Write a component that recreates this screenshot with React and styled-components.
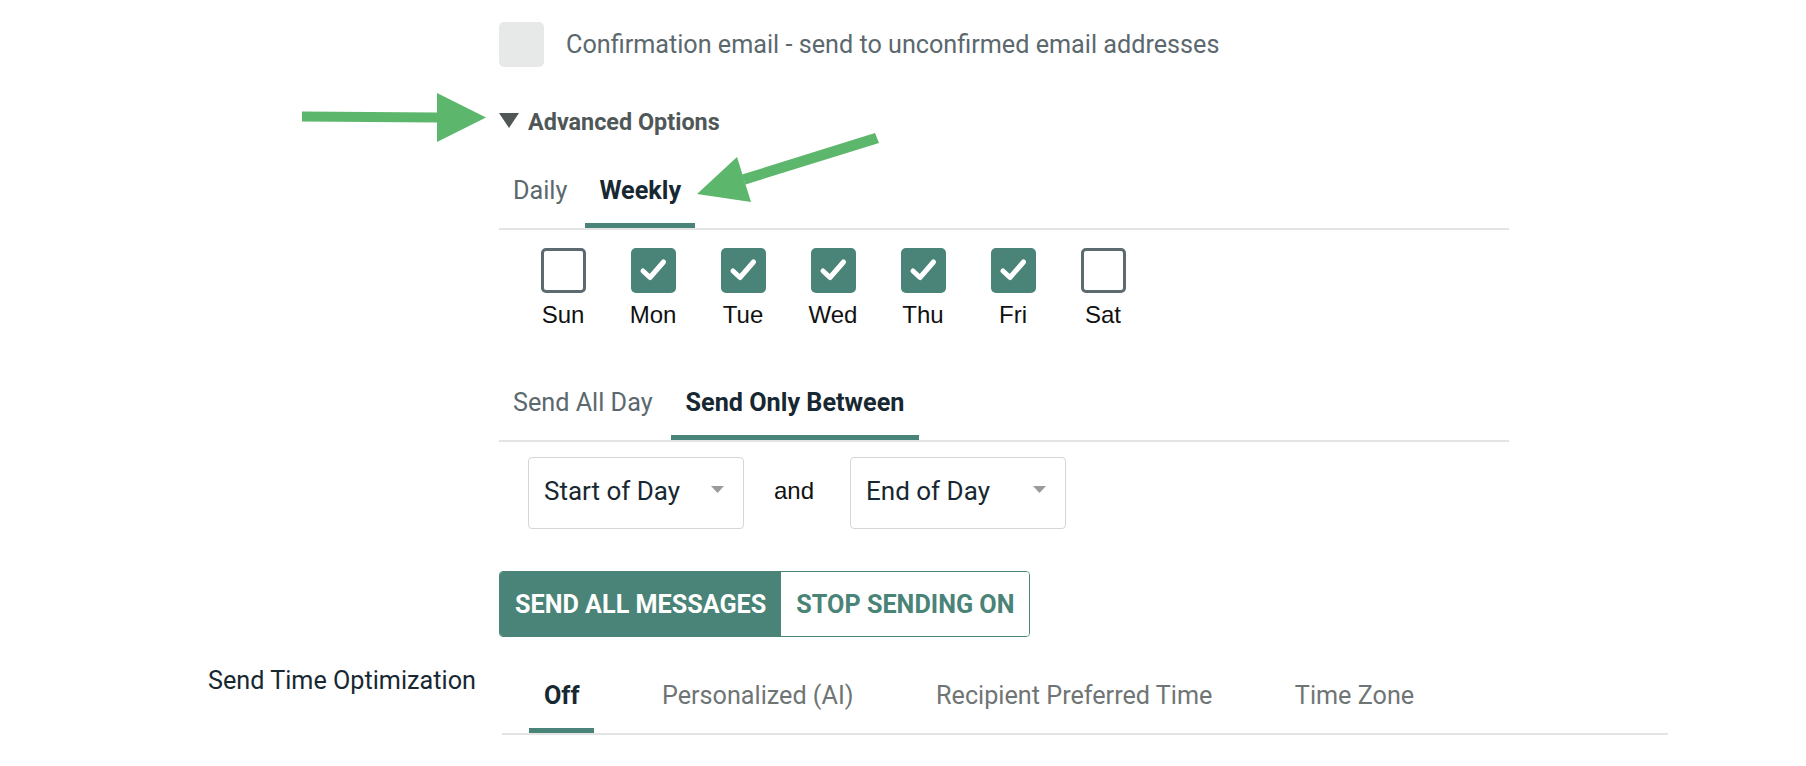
import React from 'react';
import styled, { createGlobalStyle } from 'styled-components';

const TEAL = '#4a8377';
const INK = '#172832';

const days = [
  { name: 'Sun', checked: false },
  { name: 'Mon', checked: true },
  { name: 'Tue', checked: true },
  { name: 'Wed', checked: true },
  { name: 'Thu', checked: true },
  { name: 'Fri', checked: true },
  { name: 'Sat', checked: false },
];

const optimizationTabs = ['Off', 'Personalized (AI)', 'Recipient Preferred Time', 'Time Zone'];

const Caret = () => (
  <CaretIcon width="13" height="7" viewBox="0 0 13 7">
    <path d="M0 0 L13 0 L6.5 7 Z" fill="#9b9b9b" />
  </CaretIcon>
);

const Select = ({ value }) => (
  <SelectBox>
    <SelectValue>{value}</SelectValue>
    <Caret />
  </SelectBox>
);

const Annotations = () => (
  <Overlay width="1806" height="766" viewBox="0 0 1806 766">
    <g fill="#5cb76c">
      <path d="M302 111.5 L437 112.5 L437 122.5 L302 121.5 Z" />
      <path d="M437 93 L486 117.5 L437 142 Z" />
      <path d="M879 143 L875 133 L742 174.5 L745.5 184.5 Z" />
      <path d="M697 194 L737 157 L751 202 Z" />
    </g>
  </Overlay>
);

const App = () => {
  return (
    <Page>
      <GlobalStyle />
      <Form>
        <Field>
          <CheckRow>
            <GrayBox />
            <CheckText>Confirmation email - send to unconfirmed email addresses</CheckText>
          </CheckRow>

          <Disclosure>
            <svg width="20" height="15" viewBox="0 0 20 15">
              <path d="M0 0 L20 0 L10 15 Z" fill="#4f5757" />
            </svg>
            Advanced Options
          </Disclosure>

          <TabList $gap={4} $top={40}>
            <Tab $pad={14}>Daily</Tab>
            <Tab $pad={14} $active>Weekly</Tab>
          </TabList>

          <DaysRow>
            {days.map(day => (
              <Day key={day.name}>
                <DayBox $checked={day.checked}>
                  {day.checked && (
                    <svg width="45" height="45" viewBox="0 0 45 45">
                      <path d="M12 23 L19 29.5 L32.5 14" fill="none" stroke="#fff" strokeWidth="5" strokeLinecap="round" strokeLinejoin="round" />
                    </svg>
                  )}
                </DayBox>
                <DayLabel>{day.name}</DayLabel>
              </Day>
            ))}
          </DaysRow>

          <TabList $gap={4} $top={59}>
            <Tab $pad={14}>Send All Day</Tab>
            <Tab $pad={15} $active>Send Only Between</Tab>
          </TabList>

          <TimeRow>
            <Select value="Start of Day" />
            <And>and</And>
            <Select value="End of Day" />
          </TimeRow>

          <ButtonGroup>
            <SegButton $active>Send all messages</SegButton>
            <SegButton>Stop sending on</SegButton>
          </ButtonGroup>
        </Field>

        <RowLabel>Send Time Optimization</RowLabel>
        <OptTabs $gap={52.5} $inset={27}>
          {optimizationTabs.map((t, i) => (
            <Tab key={t} $pad={15} $active={i === 0} $muted>{t}</Tab>
          ))}
        </OptTabs>
      </Form>
      <Annotations />
    </Page>
  );
};

export default App;

const GlobalStyle = createGlobalStyle`
  html, body {
    margin: 0;
    padding: 0;
    background: #fff;
  }
  body {
    font-family: Roboto, "Liberation Sans", sans-serif;
  }
`;

const Page = styled.div`
  position: relative;
  width: 1806px;
  min-height: 766px;
  padding-top: 22px;
  box-sizing: border-box;
  overflow: hidden;
`;

const Overlay = styled.svg`
  position: absolute;
  top: 0;
  left: 0;
  pointer-events: none;
`;

const Form = styled.div`
  display: grid;
  grid-template-columns: 499px 1169px;
  align-items: start;
`;

const Field = styled.div`
  grid-column: 2;
  width: 1010px;
  display: flex;
  flex-direction: column;
`;

const CheckRow = styled.div`
  display: flex;
  align-items: center;
  gap: 22px;
  height: 45px;
`;

const GrayBox = styled.div`
  width: 45px;
  height: 45px;
  border-radius: 5px;
  background: #e7e9e9;
`;

const CheckText = styled.span`
  font-size: 25.2px;
  line-height: 28px;
  color: #5b686e;
`;

const Disclosure = styled.div`
  display: flex;
  align-items: center;
  gap: 9px;
  margin-top: 41px;
  height: 28px;
  font-size: 23.4px;
  line-height: 28px;
  font-weight: 700;
  color: #4f5757;

  svg {
    margin-top: -3px;
  }
`;

const TabList = styled.div`
  display: flex;
  gap: ${p => p.$gap}px;
  margin-top: ${p => p.$top || 0}px;
  padding-left: ${p => p.$inset || 0}px;
  border-bottom: 2px solid #e3e5e5;
`;

const OptTabs = styled(TabList)`
  grid-column: 2;
  margin-left: 3px;
  padding-top: 14px;
  margin-top: 30px;
`;

const Tab = styled.div`
  padding: 1px ${p => p.$pad}px 18px;
  font-size: 25.2px;
  line-height: 28px;
  font-weight: ${p => (p.$active ? 700 : 400)};
  color: ${p => (p.$active ? INK : p.$muted ? '#6f7575' : '#5b686e')};
  border-bottom: 5px solid ${p => (p.$active ? TEAL : 'transparent')};
  white-space: nowrap;
`;

const DaysRow = styled.div`
  display: grid;
  grid-template-columns: repeat(7, 90px);
  margin-top: 18px;
  padding-left: 19px;
`;

const Day = styled.div`
  display: flex;
  flex-direction: column;
  align-items: center;
  gap: 8px;
`;

const DayBox = styled.div`
  width: 45px;
  height: 45px;
  box-sizing: border-box;
  border-radius: 5px;
  background: ${p => (p.$checked ? TEAL : '#fff')};
  border: ${p => (p.$checked ? 'none' : '3px solid #5d6a70')};
  display: flex;
  align-items: center;
  justify-content: center;
`;

const DayLabel = styled.span`
  font-family: "Liberation Sans", Arial, sans-serif;
  font-size: 24px;
  line-height: 28px;
  color: #111;
`;

const TimeRow = styled.div`
  display: flex;
  align-items: center;
  margin-top: 15px;
  padding-left: 29px;
`;

const SelectBox = styled.div`
  width: 216px;
  height: 72px;
  box-sizing: border-box;
  border: 1px solid #d4d7d7;
  border-radius: 4px;
  padding: 0 19px 0 15px;
  display: flex;
  align-items: center;
  justify-content: space-between;
  font-size: 26px;
  line-height: 28px;
  color: ${INK};
`;

const SelectValue = styled.span`
  margin-bottom: 4px;
`;

const CaretIcon = styled.svg`
  margin-top: -7px;
`;

const And = styled.span`
  font-family: "Liberation Sans", Arial, sans-serif;
  font-size: 24px;
  line-height: 28px;
  color: #111;
  margin: 0 36px 4px 30px;
`;

const ButtonGroup = styled.div`
  display: flex;
  align-self: flex-start;
  margin-top: 42px;
  border: 1px solid ${TEAL};
  border-radius: 4px;
  overflow: hidden;
`;

const SegButton = styled.button`
  height: 64px;
  padding: 0 15px;
  border: none;
  background: ${p => (p.$active ? TEAL : '#fff')};
  color: ${p => (p.$active ? '#fff' : TEAL)};
  font-family: Roboto, sans-serif;
  font-size: 25.2px;
  font-weight: 700;
  text-transform: uppercase;
  cursor: pointer;
`;

const RowLabel = styled.div`
  grid-column: 1;
  margin-top: 30px;
  padding-left: 208px;
  font-size: 25.2px;
  line-height: 28px;
  color: ${INK};
  white-space: nowrap;
`;
